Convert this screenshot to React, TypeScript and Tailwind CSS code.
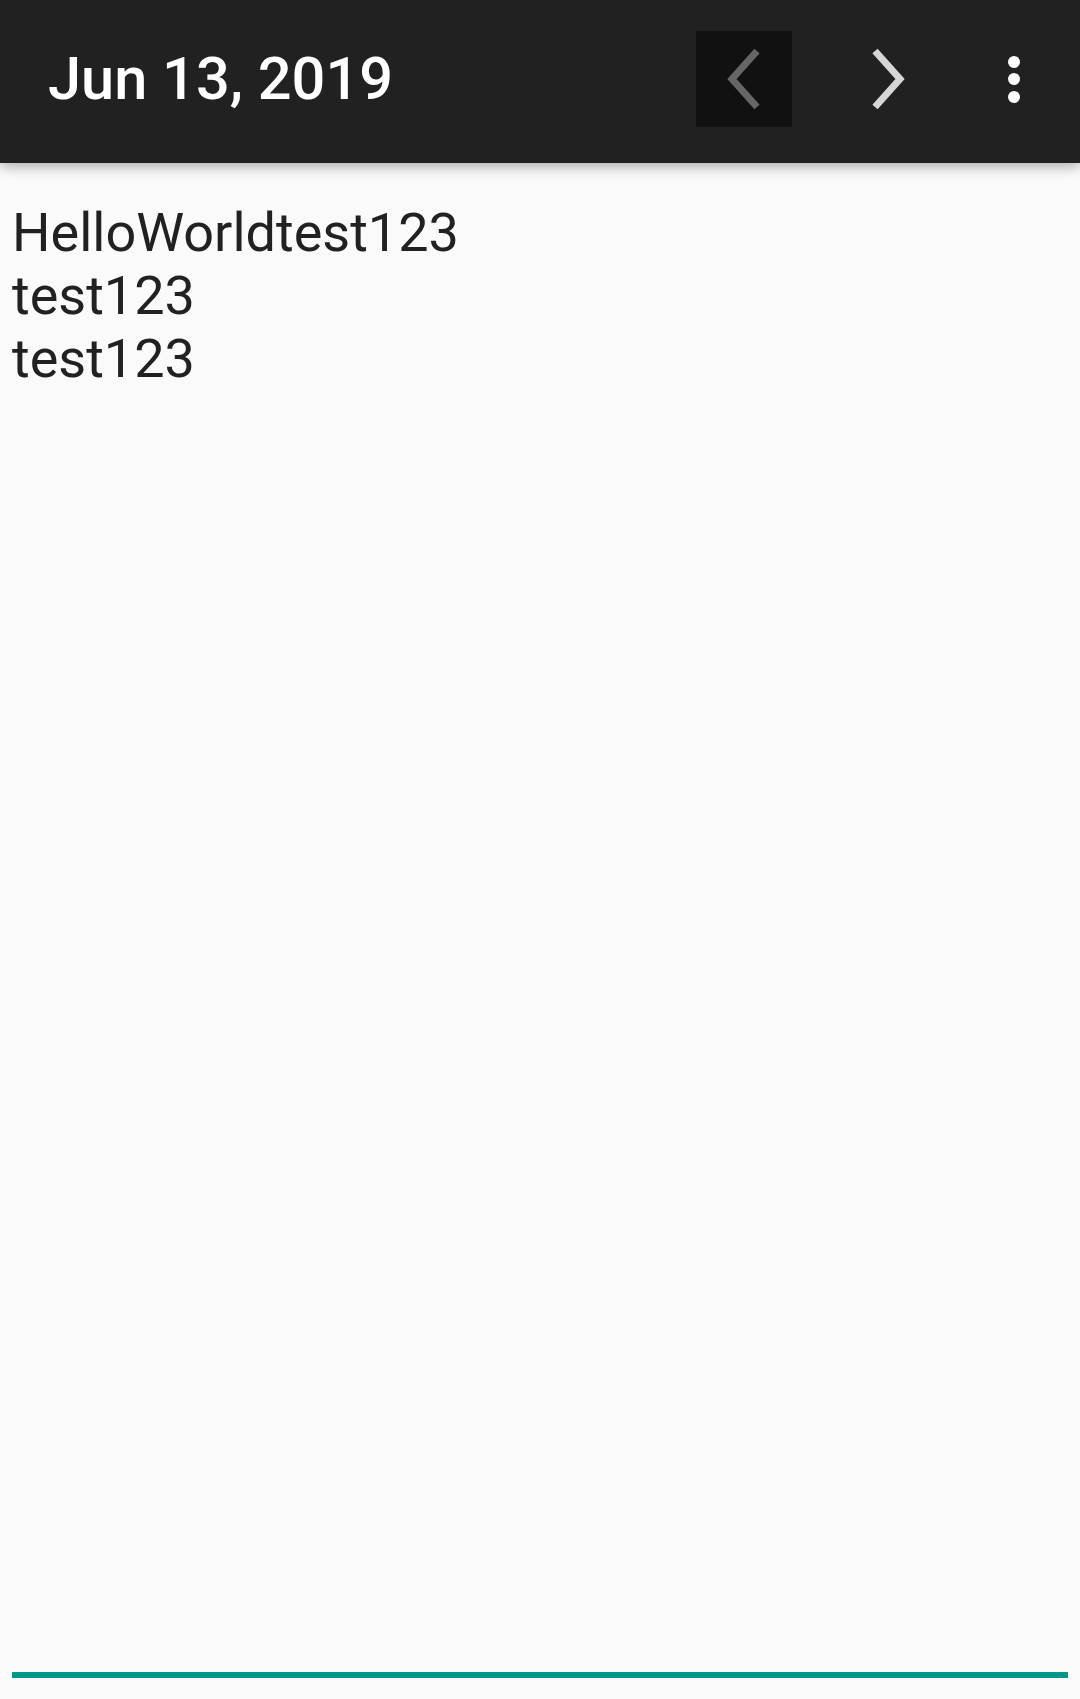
import React from "react";

export default function App() {
  return (
    <div className="w-[1080px] h-[1699px] bg-[#fafafa] flex flex-col overflow-hidden" style={{ fontFamily: "Roboto, 'Noto Sans', sans-serif" }}>
      <div className="relative h-[163px] pb-[5px] bg-[#212121] flex items-center shrink-0 shadow-[0_4px_12px_rgba(0,0,0,0.3)] z-10">
        <div className="pl-[48px] mt-[1px] text-white text-[59.5px] font-medium leading-none">Jun 13, 2019</div>
        <div className="ml-auto w-[96px] h-[96px] bg-[#111111] flex items-center justify-center">
          <svg width="40" height="64" viewBox="0 0 40 64">
            <polyline points="33,4 8,32 33,60" fill="none" stroke="#666666" strokeWidth="7" strokeLinejoin="miter" strokeLinecap="butt" />
          </svg>
        </div>
        <div className="ml-[48px] w-[96px] h-[96px] flex items-center justify-center">
          <svg width="40" height="64" viewBox="0 0 40 64">
            <polyline points="7,4 32,32 7,60" fill="none" stroke="#d6d6d6" strokeWidth="7" strokeLinejoin="miter" strokeLinecap="butt" />
          </svg>
        </div>
        <div className="ml-[30px] mr-[18px] w-[96px] h-[96px] flex flex-col items-center justify-center gap-[5.5px]">
          <div className="w-[12px] h-[12px] rounded-full bg-white" />
          <div className="w-[12px] h-[12px] rounded-full bg-white" />
          <div className="w-[12px] h-[12px] rounded-full bg-white" />
        </div>
      </div>
      <div className="flex-1 flex flex-col px-[12px] pt-[38px]">
        <div className="text-[54px] leading-[63px] text-[#212121]">
          <div>HelloWorldtest123</div>
          <div>test123</div>
          <div>test123</div>
        </div>
        <div className="mt-auto mb-[21px] h-[6px] bg-[#009688]" />
      </div>
    </div>
  );
}
